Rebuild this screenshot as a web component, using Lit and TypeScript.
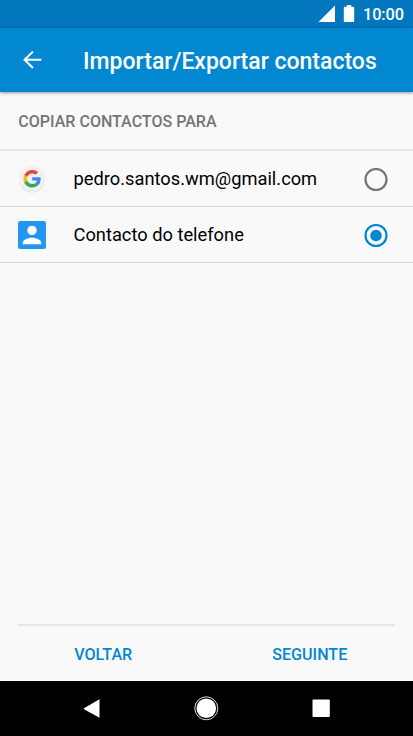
import { LitElement, html, css, svg } from "lit";
import { customElement, state } from "lit/decorators.js";

const googleIcon = svg`<svg width="28" height="28" viewBox="0 0.3 28 28">
  <circle cx="14" cy="14.9" r="13" fill="#d6d6d6"/>
  <circle cx="14" cy="14" r="13.1" fill="#f1f1f1"/>
  <g transform="translate(5.4 5.2) scale(.3667)">
    <path fill="#ea4335" d="M24 9.5c3.54 0 6.71 1.22 9.21 3.6l6.85-6.85C35.9 2.38 30.47 0 24 0 14.62 0 6.51 5.38 2.56 13.22l7.98 6.19C12.43 13.72 17.74 9.5 24 9.5z"/>
    <path fill="#4285f4" d="M46.98 24.55c0-1.57-.15-3.09-.38-4.55H24v9.02h12.94c-.58 2.96-2.26 5.48-4.78 7.18l7.73 6c4.51-4.18 7.09-10.36 7.09-17.65z"/>
    <path fill="#fbbc05" d="M10.53 28.59A14.5 14.5 0 0 1 9.77 24c0-1.6.27-3.14.76-4.59l-7.98-6.19A23.9 23.9 0 0 0 0 24c0 3.88.92 7.54 2.56 10.78l7.97-6.19z"/>
    <path fill="#34a853" d="M24 48c6.48 0 11.93-2.13 15.89-5.81l-7.73-6c-2.15 1.45-4.92 2.3-8.16 2.3-6.26 0-11.57-4.22-13.47-9.91l-7.98 6.19C6.51 42.62 14.62 48 24 48z"/>
  </g>
</svg>`;

const phoneIcon = svg`<svg width="28" height="28" viewBox="0 0 28 28">
  <rect width="28" height="28" rx="2.5" fill="#2196f3"/>
  <circle cx="14" cy="9.4" r="4.7" fill="#fff"/>
  <path d="M4.8 23.2v-1.6c0-3.3 6-4.9 9.2-4.9s9.2 1.6 9.2 4.9v1.6z" fill="#fff"/>
</svg>`;

@customElement("app-root")
export class AppRoot extends LitElement {
  @state() private selected = 1;

  static styles = css`
    :host {
      display: flex;
      flex-direction: column;
      height: 736px;
      background: #f9f9f9;
      font-family: Roboto, sans-serif;
      color: #000;
      overflow: hidden;
    }
    svg { display: block; flex: none; }
    .status {
      height: 28px;
      flex: none;
      background: #0277bd;
      display: flex;
      align-items: center;
      justify-content: flex-end;
      padding-right: 9px;
      box-sizing: border-box;
      color: #fff;
    }
    .clock { font-size: 16.3px; line-height: 28px; margin-left: 7px; padding-top: 1px; font-weight: 500; letter-spacing: -0.05px; }
    .bar {
      height: 64px;
      flex: none;
      background: #0288d1;
      box-shadow: 0 1px 3px rgba(0, 0, 0, 0.4);
      display: flex;
      align-items: center;
      padding-left: 18px;
      color: #fff;
    }
    .title { margin: 2px 0 0 37px; font-size: 23px; font-weight: 500; white-space: nowrap; }
    .heading {
      height: 59px;
      box-sizing: border-box;
      flex: none;
      padding: 1px 18px 0 18.3px;
      line-height: 58px;
      font-size: 16.05px;
      font-weight: 500;
      color: #757575;
      border-bottom: 2px solid #e5e5e5;
    }
    .row {
      height: 56px;
      box-sizing: border-box;
      flex: none;
      display: flex;
      align-items: center;
      padding: 0 25px 0 18px;
      border-bottom: 1px solid #dadada;
    }
    .radio { margin-top: 2px; }
    .label { flex: 1; margin: 0 0 0 27.5px; font-size: 18.3px; line-height: 22px; white-space: nowrap; }
    .actions {
      margin: auto 18px 0;
      flex: none;
      height: 57px;
      box-sizing: border-box;
      border-top: 2px solid #e6e6e6;
      display: flex;
    }
    .action {
      flex: 1;
      text-align: center;
      font-size: 16.1px;
      line-height: 57px;
      font-weight: 500;
      color: #0288d1;
    }
    .back { padding-right: 16px; }
    .next { padding-left: 20px; }
    .nav {
      height: 55px;
      flex: none;
      background: #000;
      display: flex;
      justify-content: center;
      align-items: center;
    }
  `;

  private radio(on: boolean) {
    const color = on ? "#0288d1" : "#757575";
    return html`<svg class="radio" width="24" height="24" viewBox="0 0.5 24 24">
      <circle cx="12" cy="12" r="10.5" fill="none" stroke=${color} stroke-width="2.2"/>
      <circle cx="12" cy="12" r=${on ? 5.8 : 0} fill=${color}/>
    </svg>`;
  }

  render() {
    const rows = [
      { icon: googleIcon, label: "pedro.santos.wm@gmail.com" },
      { icon: phoneIcon, label: "Contacto do telefone" },
    ];
    return html`
      <div class="status">
        <svg width="38" height="28" viewBox="0 0 38 28" fill="#fff">
          <path d="M17 5.5V22H.5z"/>
          <path d="M28.8 5h4.4v1.8h2.3q.7 0 .7.7v13.8q0 .7-.7.7h-9q-.7 0-.7-.7V7.5q0-.7.7-.7h2.3z"/>
        </svg>
        <span class="clock">10:00</span>
      </div>
      <div class="bar">
        <svg width="28" height="28" viewBox="0 0 28 28" fill="none" stroke="#fff" stroke-width="2">
          <path d="M23.3 13.8H6.5M15 5.6L6.5 13.8L15 22"/>
        </svg>
        <span class="title">Importar/Exportar contactos</span>
      </div>
      <div class="heading">COPIAR CONTACTOS PARA</div>
      ${rows.map((r, i) => html`
        <div class="row" @click=${() => (this.selected = i)}>
          ${r.icon}<span class="label">${r.label}</span>${this.radio(this.selected === i)}
        </div>`)}
      <div class="actions">
        <div class="action back">VOLTAR</div>
        <div class="action next">SEGUINTE</div>
      </div>
      <div class="nav">
        <svg width="413" height="55" viewBox="0 0 413 55" fill="#fff">
          <path d="M99.5 18.6V36.8L84 28.2q-.8-.5 0-1L99 18.4q.5-.2.5.2z"/>
          <circle cx="206.3" cy="27.3" r="9.8"/>
          <circle cx="206.3" cy="27.3" r="11.5" fill="none" stroke="#ddd" stroke-width="1"/>
          <rect x="312.5" y="18.6" width="17.3" height="17.3" rx="1"/>
        </svg>
      </div>
    `;
  }
}
